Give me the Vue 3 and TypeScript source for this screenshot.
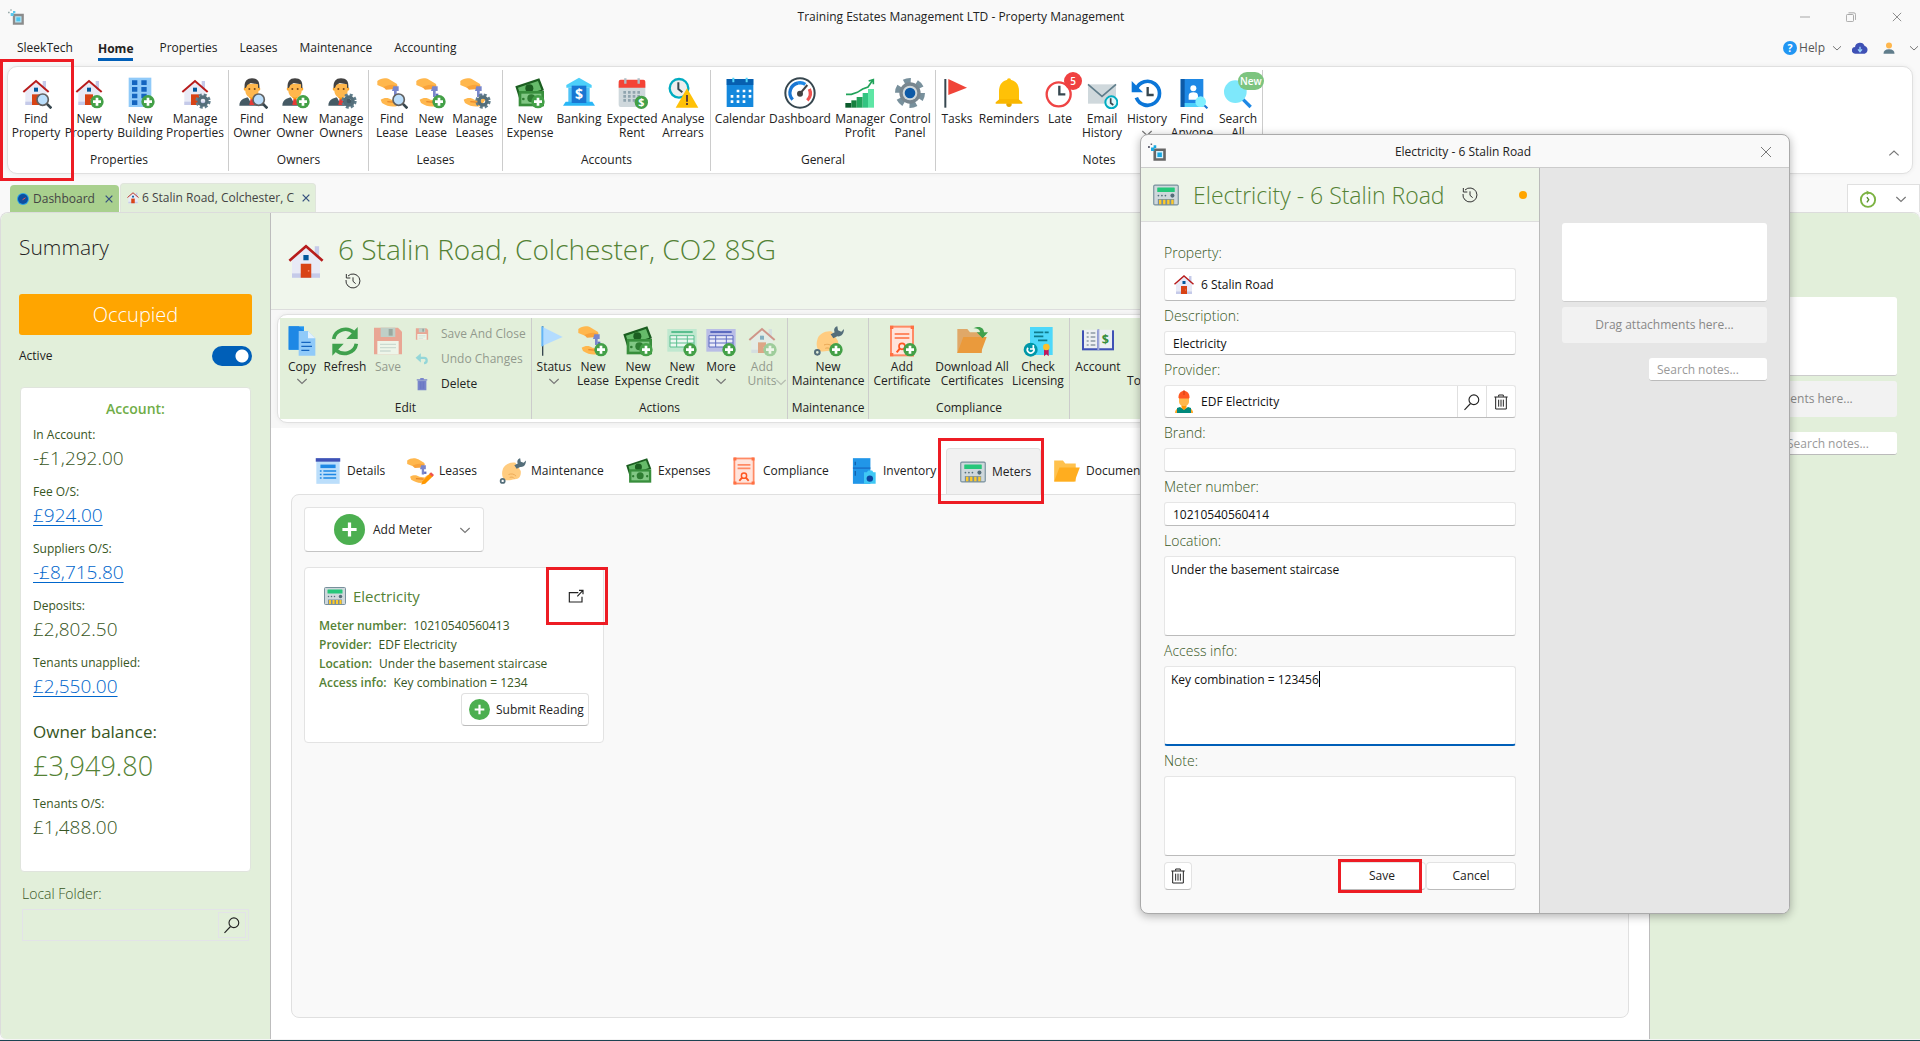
<script setup lang="ts">
import { ref } from 'vue'

interface Item { icon: string; lines: string[]; w: number; badge?: string; chevron?: boolean; off?: boolean; mark?: boolean }
interface Group { name: string; w: number; pad?: number; items: Item[]; side?: { icon: string; text: string; off?: boolean }[] }

const plus = '<circle cx="36" cy="37" r="10" fill="#43a047"/><path d="M36 31v12M30 37h12" stroke="#fff" stroke-width="4" fill="none"/>'
const find = '<path d="M40 40l7 7" stroke="#37474f" stroke-width="4"/><circle cx="34" cy="34" r="8.500" fill="#bbdefb" stroke="#616161" stroke-width="2.500"/>'
const gear = '<circle cx="36" cy="36" r="9.500" fill="none" stroke="#607d8b" stroke-width="4" stroke-dasharray="4.400 3.060"/><circle cx="36" cy="36" r="6" fill="none" stroke="#546e7a" stroke-width="5"/>'
const house = '<path d="M34 6h5v14h-5z" fill="#c5cae9"/><path d="M8 22L24 8l16 14v20H8z" fill="#e8eaf6"/><path d="M8 37h32v5H8z" fill="#c5cae9"/><path d="M18 26h12v16H18z" fill="#d84315"/><path d="M21 16h6v6h-6z" fill="#01579b"/><circle cx="27" cy="34" r="1" fill="#ff8a65"/><path d="M5 22.500L24 6l19 16.500" fill="none" stroke="#b71c1c" stroke-width="3"/>'
const person = '<path d="M5 43c0-9 8-13 19-13s19 4 19 13z" fill="#455a64"/><path d="M17 29l7 13 7-13-3-3h-8z" fill="#fff"/><path d="M22 32h4l2 10h-8z" fill="#e53935"/><path d="M19 22h10v8l-5 4-5-4z" fill="#ff9800"/><circle cx="14" cy="18" r="2.500" fill="#ffa726"/><circle cx="34" cy="18" r="2.500" fill="#ffa726"/><path d="M14 10h20v10c0 7-4 11-10 11s-10-4-10-11z" fill="#ffb74d"/><path d="M13 17C12 7 16 2 24 2c8 0 12 4 11 15l-2-1v-5l-11-2-5 3-2 4z" fill="#424242"/><circle cx="20" cy="18" r="1.500" fill="#784719"/><circle cx="28" cy="18" r="1.500" fill="#784719"/>'
const lease = '<path d="M2 6c6-5 14-5 19-2l10 6c2 2 1 5-2 6H12L2 12z" fill="#ffb74d"/><path d="M11 15c5-2 10-4 16-3l5 1-2 5-15 1z" fill="#f9a33b"/><path d="M26 14h8v7h-3v9h-4v-9h-3z" fill="#7986cb"/><path d="M31 25h4v4h-4z" fill="#5c6bc0"/><path d="M7 34c6-4 12-3 16 0l9 1c3-3 7-6 10-4l-9 12c-8 3-16 1-24-4z" fill="#ffb74d"/><path d="M17 37l13 1" stroke="#e8892a" stroke-width="2"/>'
const money = '<path d="M2 14L38 2l7 18L8 33z" fill="#1b5e20"/><path d="M6 16L36 6l5 13L10 29z" fill="#66bb6a"/><circle cx="23" cy="17" r="6" fill="#1b5e20"/><path d="M7 21h38v23H7z" fill="#388e3c"/><path d="M11 25h30v15H11z" fill="#81c784"/><circle cx="26" cy="32" r="6" fill="#2e7d32"/><circle cx="14" cy="33" r="2" fill="#2e7d32"/><circle cx="38" cy="33" r="2" fill="#2e7d32"/>'
const meter = '<rect x="3" y="7" width="42" height="34" rx="2" fill="#cfd8dc" stroke="#78909c" stroke-width="2"/><rect x="9" y="11" width="30" height="8" rx="1" fill="#26c77a"/><circle cx="11" cy="25" r="1.500" fill="#546e7a"/><circle cx="17" cy="25" r="1.500" fill="#546e7a"/><circle cx="23" cy="25" r="1.500" fill="#546e7a"/><circle cx="35" cy="25" r="3.500" fill="#546e7a"/><path d="M10 31h28v10H10z" fill="#78909c"/><path d="M12 32h4v8h-4zM19 32h4v8h-4zM26 32h4v8h-4zM33 32h4v8h-4z" fill="#ffca28"/>'
const fist = '<path d="M8 22c2-9 14-14 22-12l9 14c1 9-3 14-10 14-7 1-12 3-18 1-4-4-5-11-3-17z" fill="#ffcc80"/><path d="M18 30c5-2 10-1 13 3M20 35c3-1 6-1 8 2" fill="none" stroke="#e9a653" stroke-width="1.500"/><path d="M28 14l6-3c-2-4 0-8 4-9l1 6 5 2 4-4c0 7-4 12-10 11l-6 3z" fill="#546e7a"/><circle cx="8" cy="41" r="3.500" fill="none" stroke="#546e7a" stroke-width="3"/>'
const cert = '<path d="M6 1h36v46H6z" fill="#ff8a65"/><path d="M9 4h30v40H9z" fill="#ffe4dc"/><path d="M6 1h5v5H6zM37 1h5v5h-5zM6 42h5v5H6zM37 42h5v5h-5z" fill="#ff7043"/><path d="M13 12h22v3H13zM13 18h22v3H13z" fill="#ff8a65"/><circle cx="24" cy="32" r="4.500" fill="none" stroke="#ff5722" stroke-width="2.500"/><path d="M21 35l-5 6m11-6l5 6" stroke="#ff5722" stroke-width="3"/>'
const save = '<path d="M3 4h36l6 6v34H3z" fill="#f44336"/><path d="M13 4h22v14H13z" fill="#90a4ae"/><path d="M25 6h6v10h-6z" fill="#37474f"/><path d="M8 24h32v20H8z" fill="#fff"/><path d="M12 29h24M12 34h24M12 39h16" stroke="#b0bec5" stroke-width="2"/>'
const sheet = (a: string, b: string) => `<path d="M2 6h44v34H2z" fill="${a}"/><path d="M8 9h32v3H8z" fill="${b}"/><path d="M6 16h36v17H6z" fill="#fff" opacity=".7"/><path d="M6 16h36v17H6zM6 21h36M6 27h36M16 16v17M32 16v17" fill="none" stroke="${b}" stroke-width="1.500"/>`
const folder = (a: string, b: string) => `<path d="M2 6h15l4 5h18v31H2z" fill="${a}"/><path d="M11 18h35l-9 24H2z" fill="${b}"/>`

const icons: Record<string, string> = {
  house, meter, lease, money, fist, cert, save,
  findHouse: house + find, newHouse: house + plus, manHouse: house + gear,
  building: '<path d="M7 1h34v44H7z" fill="#90caf9"/><path d="M12 5h8v7h-8zM26 5h8v7h-8zM12 15h8v7h-8zM26 15h8v7h-8zM12 25h8v7h-8zM26 25h8v7h-8zM12 35h8v7h-8z" fill="#1565c0"/>' + plus,
  findOwner: person + find, newOwner: person + plus, manOwner: person + gear,
  findLease: lease + find, newLease: lease + plus, manLease: lease + gear,
  newExpense: money + plus,
  bank: '<path d="M24 1l19 11v4H5v-4z" fill="#4dd0fa"/><path d="M8 16h32v24H8z" fill="#4fc3f7"/><path d="M4 37h40l4 6H0z" fill="#29b6f6"/><path d="M13 13h22v26H13z" fill="#1976d2"/><text x="24" y="33" font-size="21" font-weight="700" fill="#fff" text-anchor="middle">$</text>',
  rent: '<path d="M4 10h40v32a3 3 0 01-3 3H7a3 3 0 01-3-3z" fill="#cfd8dc"/><path d="M7 4h34a3 3 0 013 3v9H4V7a3 3 0 013-3z" fill="#f44336"/><path d="M14 2v8M34 2v8" stroke="#b0bec5" stroke-width="3.500"/><path d="M11 23h28M11 29h28M11 35h20" stroke="#90a4ae" stroke-width="4" stroke-dasharray="4 3"/><circle cx="38" cy="38" r="10" fill="#43a047"/><text x="38" y="44" font-size="16" font-weight="700" fill="#fff" text-anchor="middle">$</text>',
  arrears: '<circle cx="18" cy="17" r="14" fill="#eee" stroke="#00acc1" stroke-width="3.500"/><path d="M17 8v10l6 5" fill="none" stroke="#37474f" stroke-width="3"/><path d="M30 17l17 29H13z" fill="#ffc107"/><path d="M28.500 27h3v10h-3zM28.500 39h3v3h-3z" fill="#5d4037"/>',
  calendar: '<path d="M4 3h40v42H4z" fill="#1488dd"/><path d="M4 3h40v9H4z" fill="#075faf"/><path d="M14 1v7M34 1v7" stroke="#50d4fa" stroke-width="3"/><path d="M19 21h22M10 29h31M10 37h22" stroke="#fff" stroke-width="4" stroke-dasharray="4 5"/>',
  gauge: '<circle cx="24" cy="24" r="22" fill="#fff" stroke="#37474f" stroke-width="3"/><path d="M13 34A15 15 0 0121 9" fill="none" stroke="#1976d2" stroke-width="5"/><path d="M21 9a15 15 0 0111 2" fill="none" stroke="#1e88e5" stroke-width="5"/><path d="M38 18a15 15 0 01-3 17" fill="none" stroke="#ef5350" stroke-width="5"/><circle cx="24" cy="25" r="4.500" fill="#424242"/><path d="M24 25L35 12" stroke="#424242" stroke-width="3"/>',
  profit: '<path d="M2 39h9v7H2z" fill="#0b5c2c"/><path d="M11 35h8v11h-8z" fill="#16803f"/><path d="M19 30h9v16h-9z" fill="#21a35a"/><path d="M28 24h8v22h-8z" fill="#33c481"/><path d="M36 18h9v28h-9z" fill="#5ee6a5"/><path d="M3 26h8l9-3 8-5 8-3 7-10M37 6l7-2v7" fill="none" stroke="#21a35a" stroke-width="2.500"/>',
  control: '<circle cx="24" cy="24" r="18" fill="none" stroke="#78909c" stroke-width="9" stroke-dasharray="10 8.850"/><circle cx="24" cy="24" r="16" fill="#78868f"/><circle cx="24" cy="24" r="11" fill="#cfd8dc"/><circle cx="24" cy="24" r="8" fill="#0d5aa7"/>',
  tasks: '<path d="M5 3h3v43H5z" fill="#37474f"/><path d="M11 3l28 13-28 11z" fill="#f04438"/>',
  bell: '<circle cx="24" cy="5" r="3" fill="#ffc107"/><circle cx="24" cy="41" r="4" fill="#e6a700"/><path d="M24 4c-10 0-15 8-15 17v14h30V21c0-9-5-17-15-17z" fill="#ffc107"/><path d="M4 38l6-5h28l6 5v2H4z" fill="#f9b700"/>',
  late: '<circle cx="22" cy="26" r="18" fill="#fff" stroke="#ef4444" stroke-width="3.500"/><path d="M23 13v13h9" fill="none" stroke="#37474f" stroke-width="3.500"/>',
  email: '<path d="M3 11h42v29H3z" fill="#cfd8dc"/><path d="M3 11l21 18 21-18" fill="none" stroke="#607d8b" stroke-width="2.500"/><circle cx="38" cy="38" r="9" fill="#e0f7fa" stroke="#00acc1" stroke-width="3"/><path d="M37 32v7l4 3" fill="none" stroke="#37474f" stroke-width="2.500"/>',
  history: '<path d="M8 18a18 18 0 110 13" fill="none" stroke="#0b76d8" stroke-width="5.500"/><path d="M1 6v17h17z" fill="#0b76d8"/><path d="M25 15v12h9" fill="none" stroke="#37474f" stroke-width="3.500"/>',
  anyone: '<path d="M7 3h34v42H7z" fill="#1e88e5"/><path d="M7 3h6v42H7z" fill="#0d5aa7"/><path d="M13 39h28v6H13z" fill="#4dd0fa"/><circle cx="26" cy="17" r="4.500" fill="#fff"/><path d="M19 34v-6c0-4 3-5 7-5s7 1 7 5v6z" fill="#fff"/><path d="M42 42l5 5" stroke="#1976d2" stroke-width="3"/><circle cx="37" cy="37" r="8" fill="#80f0ff"/>',
  searchAll: '<path d="M30 32l13 13" stroke="#1e88e5" stroke-width="5"/><circle cx="20" cy="22" r="17" fill="#7ee8fb"/>',
  copy: '<path d="M4 2h23v35H4z" fill="#2196f3"/><path d="M4 2h15l10 9v26H4z" fill="#1e88e5"/><path d="M19 9h14l11 11v26H19z" fill="#90caf9"/><path d="M33 9v11h11z" fill="#e3f2fd"/><path d="M23 26h14M23 32h16M23 38h12" stroke="#1565c0" stroke-width="2"/>',
  refresh: '<path d="M7 21A18 17 0 0137 11" fill="none" stroke="#3fa14d" stroke-width="5.500"/><path d="M43 3v18H26z" fill="#3fa14d"/><path d="M41 28A18 17 0 0111 38" fill="none" stroke="#3fa14d" stroke-width="5.500"/><path d="M5 46V28h17z" fill="#3fa14d"/>',
  undo: '<path d="M20 4v32L2 20z" fill="#29b6d6"/><path d="M16 20h15q9 0 9 9t-9 9" fill="none" stroke="#29b6d6" stroke-width="8"/>',
  bin: '<path d="M6 8h36v4H6zM18 3h12v5H18zM9 13h30v32H9z" fill="#7986cb"/><path d="M18 16v25M24 16v25M30 16v25" stroke="#5c6bc0" stroke-width="2"/>',
  status: '<path d="M6 2h2v44H6z" fill="#37474f"/><path d="M7 3l30 15L7 31z" fill="#b3dcff"/><path d="M5 2h3v30H5z" fill="#64b5f6"/>',
  credit: sheet('#bfe8cf', '#5abf8f') + plus, more: sheet('#b9bde6', '#5c6bc0') + plus,
  newMaint: fist + plus, newCert: cert + plus,
  download: folder('#e0a868', '#ea9a3c') + '<path d="M26 5c10-5 16 0 16 6h6l-8 9-9-9h5c0-4-4-6-10-6z" fill="#3fa14d"/>',
  check: '<path d="M12 3h34v42H12z" fill="#4dd8fa"/><path d="M18 11h22M18 17h16M24 23h16" stroke="#0f7b8c" stroke-width="2.500" stroke-dasharray="14 2"/><path d="M33 34h7v13l-3.500-3-3.500 3z" fill="#c2185b"/><circle cx="36.500" cy="33" r="5" fill="#fbc02d"/><circle cx="13" cy="37" r="10.500" fill="#0097a7"/><path d="M9 34a5 5 0 108 0M17 30v6h-5" fill="none" stroke="#fff" stroke-width="2.500"/>',
  account: '<path d="M0 8h48v30H0z" fill="#3f51b5"/><path d="M3 7h20v28H3zM25 7h20v28H25z" fill="#eceff1"/><path d="M23 6h3v32h-3z" fill="#9fa8da"/><path d="M7 12h3M13 12h7M7 18h3M13 18h7M7 24h3M13 24h7M7 30h3M13 30h7" stroke="#8d9aa5" stroke-width="2"/><text x="35" y="28" font-size="19" font-weight="700" fill="#388e3c" text-anchor="middle">$</text>',
  none: '',
  details: '<path d="M4 2h40v44H4z" fill="#bbdefb"/><path d="M3 2h42v6H3z" fill="#3f51b5"/><path d="M11 13h26v6H11z" fill="#1e88e5"/><path d="M10 24h3M16 24h22M10 30h3M16 30h22M10 36h3M16 36h22" stroke="#1e88e5" stroke-width="2.500"/>',
  leasePen: lease + '<path d="M28 42l14-15 5 5-14 14-7 1z" fill="#ff9800"/><path d="M40 29l3-3 5 5-3 3z" fill="#ef5350"/>',
  fridge: '<path d="M5 2h30v44H5z" fill="#2196e8"/><path d="M5 18h30v2H5z" fill="#1565c0"/><path d="M9 8v6M9 24v8" stroke="#0d5aa7" stroke-width="2"/><path d="M24 26h5l2-3h7l2 3h4v20H24z" fill="#3fc8f5"/><circle cx="34" cy="37" r="5.500" fill="#0d47a1"/>',
  folder: folder('#ffc14d', '#ffad1f'),
  worker: '<path d="M6 46c0-8 6-11 18-11s18 3 18 11z" fill="#ffa726"/><path d="M10 46V36l6-2 8 6 8-6 6 2v10z" fill="#00897b"/><path d="M19 25h10v9l-5 5-5-5z" fill="#ff9800"/><path d="M14 14h20v9c0 6-5 9-10 9s-10-3-10-9z" fill="#ffb74d"/><path d="M13 15c0-8 4-13 11-13s11 5 11 13l-1 2H14z" fill="#ff5722"/><path d="M22 1h4v9h-4z" fill="#e64a19"/>',
  addCircle: '<circle cx="24" cy="24" r="24" fill="#4caf50"/><path d="M24 13v22M13 24h22" stroke="#fff" stroke-width="5"/>',
  glass: '<circle cx="29" cy="18" r="13" fill="none" stroke="#222" stroke-width="3"/><path d="M20 28L4 45" stroke="#222" stroke-width="3"/>',
  trash: '<path d="M4 9h40M17 8V3h14v5M8 9v36h32V9M17 17v21M24 17v21M31 17v21" fill="none" stroke="#222" stroke-width="3"/>',
  clock: '<path d="M9 9a21 21 0 11-6 12" fill="none" stroke="#333" stroke-width="3"/><path d="M4 3v12h12M24 13v12l8 7" fill="none" stroke="#333" stroke-width="3"/>',
  logo: '<path d="M18 18h26v26H18z" fill="#b9e6f5" stroke="#8c8c8c" stroke-width="7"/><path d="M25 25h12v12H25z" fill="#4cc5ef"/><path d="M8 12h9v9H8zM15 6h7v7h-7z" fill="#5ac8ee"/><path d="M0 8h5v5H0zM7 1h4v4H7z" fill="#9aa"/>',
  logoDark: '<path d="M18 18h26v26H18z" fill="#d6f0fa" stroke="#666" stroke-width="7"/><path d="M25 25h12v12H25z" fill="#17a7e0"/><path d="M8 12h9v9H8zM15 6h7v7h-7z" fill="#17a7e0"/><path d="M0 8h5v5H0zM7 1h4v4H7z" fill="#667"/>',
  chev: '<path d="M8 17l16 15 16-15" fill="none" stroke="#777" stroke-width="4"/>',
  chevUp: '<path d="M8 32l16-15 16 15" fill="none" stroke="#777" stroke-width="4"/>',
  cross: '<path d="M4 4l40 40M44 4L4 44" fill="none" stroke="#666" stroke-width="3.500"/>',
  crossTab: '<path d="M8 8l32 32M40 8L8 40" fill="none" stroke="#35507e" stroke-width="6"/>',
  min: '<path d="M0 24h48" stroke="#999" stroke-width="4"/>',
  max: '<rect x="2" y="12" width="34" height="34" rx="5" fill="none" stroke="#999" stroke-width="4"/><path d="M12 4h26q8 0 8 8v26" fill="none" stroke="#999" stroke-width="4"/>',
  help: '<circle cx="24" cy="24" r="24" fill="#2196f3"/><text x="24" y="37" font-size="36" font-weight="700" fill="#fff" text-anchor="middle">?</text>',
  cloud: '<path d="M10 41a10 10 0 01-1-20 15 15 0 0129-3 12 12 0 010 23z" fill="#3f51b5"/><path d="M24 20v14M18 28l6 7 6-7" fill="none" stroke="#9fd8ff" stroke-width="4"/>',
  user: '<circle cx="24" cy="14" r="12" fill="#ffb74d"/><path d="M2 47c0-12 7-18 22-18s22 6 22 18z" fill="#607d8b"/>',
  dash: '<circle cx="24" cy="24" r="24" fill="#29a3e8"/><circle cx="24" cy="24" r="20" fill="#0d4fa0"/><path d="M22 27l12-8" stroke="#ef5350" stroke-width="4"/>',
  timer: '<circle cx="24" cy="26" r="19" fill="none" stroke="#7cb342" stroke-width="5"/><path d="M20 1l10 6-9 6z" fill="#7cb342"/><path d="M21 19l5 7-5 7" fill="none" stroke="#558b2f" stroke-width="3.500"/>',
  popout: '<path d="M31 14H4v28h38V26M28 25L44 8M33 7h12v12" fill="none" stroke="#222" stroke-width="3.500"/>',
}

const menus = ['Properties', 'Leases', 'Maintenance', 'Accounting']

const ribbon: Group[] = [
  { name: 'Properties', w: 221, pad: 2, items: [
    { icon: 'findHouse', lines: ['Find', 'Property'], w: 52, mark: true },
    { icon: 'newHouse', lines: ['New', 'Property'], w: 54 },
    { icon: 'building', lines: ['New', 'Building'], w: 48 },
    { icon: 'manHouse', lines: ['Manage', 'Properties'], w: 62 }] },
  { name: 'Owners', w: 140, items: [
    { icon: 'findOwner', lines: ['Find', 'Owner'], w: 46 },
    { icon: 'newOwner', lines: ['New', 'Owner'], w: 40 },
    { icon: 'manOwner', lines: ['Manage', 'Owners'], w: 52 }] },
  { name: 'Leases', w: 134, items: [
    { icon: 'findLease', lines: ['Find', 'Lease'], w: 46 },
    { icon: 'newLease', lines: ['New', 'Lease'], w: 32 },
    { icon: 'manLease', lines: ['Manage', 'Leases'], w: 55 }] },
  { name: 'Accounts', w: 208, items: [
    { icon: 'newExpense', lines: ['New', 'Expense'], w: 54 },
    { icon: 'bank', lines: ['Banking'], w: 44 },
    { icon: 'rent', lines: ['Expected', 'Rent'], w: 62 },
    { icon: 'arrears', lines: ['Analyse', 'Arrears'], w: 40 }] },
  { name: 'General', w: 225, items: [
    { icon: 'calendar', lines: ['Calendar'], w: 58 },
    { icon: 'gauge', lines: ['Dashboard'], w: 62 },
    { icon: 'profit', lines: ['Manager', 'Profit'], w: 58 },
    { icon: 'control', lines: ['Control', 'Panel'], w: 42 }] },
  { name: 'Notes', w: 327, items: [
    { icon: 'tasks', lines: ['Tasks'], w: 42 },
    { icon: 'bell', lines: ['Reminders'], w: 62 },
    { icon: 'late', lines: ['Late'], w: 40, badge: '5' },
    { icon: 'email', lines: ['Email', 'History'], w: 44 },
    { icon: 'history', lines: ['History'], w: 46, chevron: true },
    { icon: 'anyone', lines: ['Find', 'Anyone'], w: 44 },
    { icon: 'searchAll', lines: ['Search', 'All'], w: 48, badge: 'New' }] },
]

const actions: Group[] = [
  { name: 'Edit', w: 252, items: [
    { icon: 'copy', lines: ['Copy'], w: 44, chevron: true },
    { icon: 'refresh', lines: ['Refresh'], w: 42 },
    { icon: 'save', lines: ['Save'], w: 44, off: true }],
    side: [
      { icon: 'save', text: 'Save And Close', off: true },
      { icon: 'undo', text: 'Undo Changes', off: true },
      { icon: 'bin', text: 'Delete' }] },
  { name: 'Actions', w: 256, items: [
    { icon: 'status', lines: ['Status'], w: 44, chevron: true },
    { icon: 'newLease', lines: ['New', 'Lease'], w: 34 },
    { icon: 'newExpense', lines: ['New', 'Expense'], w: 56 },
    { icon: 'credit', lines: ['New', 'Credit'], w: 32 },
    { icon: 'more', lines: ['More'], w: 46, chevron: true },
    { icon: 'newHouse', lines: ['Add', 'Units'], w: 36, off: true, chevron: true }] },
  { name: 'Maintenance', w: 81, items: [{ icon: 'newMaint', lines: ['New', 'Maintenance'], w: 80 }] },
  { name: 'Compliance', w: 201, items: [
    { icon: 'newCert', lines: ['Add', 'Certificate'], w: 66 },
    { icon: 'download', lines: ['Download All', 'Certificates'], w: 74 },
    { icon: 'check', lines: ['Check', 'Licensing'], w: 58 }] },
  { name: '', w: 300, items: [
    { icon: 'account', lines: ['Account'], w: 56 },
    { icon: 'none', lines: ['\u00a0', 'To'], w: 16 }] },
]

const figures = [
  { label: 'In Account:', value: '-£1,292.00', link: false },
  { label: 'Fee O/S:', value: '£924.00', link: true },
  { label: 'Suppliers O/S:', value: '-£8,715.80', link: true },
  { label: 'Deposits:', value: '£2,802.50', link: false },
  { label: 'Tenants unapplied:', value: '£2,550.00', link: true },
]

const tabs = [
  { icon: 'details', text: 'Details', w: 92 },
  { icon: 'leasePen', text: 'Leases', w: 92 },
  { icon: 'fist', text: 'Maintenance', w: 127 },
  { icon: 'money', text: 'Expenses', w: 105 },
  { icon: 'cert', text: 'Compliance', w: 120 },
  { icon: 'fridge', text: 'Inventory', w: 108 },
  { icon: 'meter', text: 'Meters', w: 95, on: true },
  { icon: 'folder', text: 'Documents', w: 120 },
]

const facts = [
  ['Meter number:', '10210540560413'],
  ['Provider:', 'EDF Electricity'],
  ['Location:', 'Under the basement staircase'],
  ['Access info:', 'Key combination = 1234'],
]

const active = ref(true)
const form = ref({
  property: '6 Stalin Road', description: 'Electricity', provider: 'EDF Electricity', brand: '',
  number: '10210540560414', location: 'Under the basement staircase', access: 'Key combination = 123456', note: '',
})
</script>

<template>
  <div class="app">
    <header class="titlebar">
      <svg class="i16" viewBox="0 0 48 48" v-html="icons.logo" />
      <span class="apptitle">Training Estates Management LTD - Property Management</span>
      <div class="winbtns">
        <button aria-label="Minimise"><svg class="i10" viewBox="0 0 48 48" v-html="icons.min" /></button>
        <button aria-label="Restore"><svg class="i10" viewBox="0 0 48 48" v-html="icons.max" /></button>
        <button aria-label="Close"><svg class="i10" viewBox="0 0 48 48" v-html="icons.cross" /></button>
      </div>
    </header>

    <nav class="menubar">
      <button class="brand">SleekTech</button>
      <button class="home">Home</button>
      <button v-for="m in menus" :key="m" class="menu">{{ m }}</button>
      <div class="account">
        <button class="help"><svg class="i14" viewBox="0 0 48 48" v-html="icons.help" />Help</button>
        <svg class="i12" viewBox="0 0 48 48" v-html="icons.chev" />
        <svg class="i16" viewBox="0 0 48 48" v-html="icons.cloud" />
        <svg class="i12 user" viewBox="0 0 48 48" v-html="icons.user" />
        <svg class="i12" viewBox="0 0 48 48" v-html="icons.chev" />
      </div>
    </nav>

    <section class="ribbon main-ribbon">
      <div v-for="g in ribbon" :key="g.name" class="group" :style="{ width: g.w + 'px', paddingLeft: (g.pad || 0) + 'px' }">
        <div class="items">
          <button v-for="it in g.items" :key="it.icon" class="tool" :style="{ width: it.w + 'px' }">
            <svg class="i32" viewBox="0 0 48 48" v-html="icons[it.icon]" />
            <span v-for="l in it.lines" :key="l">{{ l }}</span>
            <svg v-if="it.chevron" class="i14 drop" viewBox="0 0 48 48" v-html="icons.chev" />
            <b v-if="it.badge" class="badge" :class="{ fresh: it.badge === 'New' }">{{ it.badge }}</b>
            <i v-if="it.mark" class="mark mark-find" />
          </button>
        </div>
        <div class="gname">{{ g.name }}</div>
      </div>
      <button class="collapse" aria-label="Collapse ribbon"><svg class="i14" viewBox="0 0 48 48" v-html="icons.chevUp" /></button>
    </section>

    <div class="doctabs">
      <button class="doc dash"><svg class="i12" viewBox="0 0 48 48" v-html="icons.dash" /><span>Dashboard</span><svg class="i10" viewBox="0 0 48 48" v-html="icons.crossTab" /></button>
      <button class="doc prop"><svg class="i14" viewBox="0 0 48 48" v-html="icons.house" /><span>6 Stalin Road, Colchester, C</span><svg class="i10" viewBox="0 0 48 48" v-html="icons.crossTab" /></button>
      <button class="timer" aria-label="Recent"><svg class="i18" viewBox="0 0 48 48" v-html="icons.timer" /><svg class="i14" viewBox="0 0 48 48" v-html="icons.chev" /></button>
    </div>

    <main class="body">
      <aside class="left">
        <h2>Summary</h2>
        <button class="occupied">Occupied</button>
        <label class="active">Active<input v-model="active" type="checkbox" role="switch"></label>
        <section class="acct">
          <h3>Account:</h3>
          <div v-for="f in figures" :key="f.label" class="fig">
            <span>{{ f.label }}</span>
            <a v-if="f.link" href="#">{{ f.value }}</a>
            <strong v-else>{{ f.value }}</strong>
          </div>
          <div class="fig owner"><span>Owner balance:</span><strong>£3,949.80</strong></div>
          <div class="fig"><span>Tenants O/S:</span><strong>£1,488.00</strong></div>
        </section>
        <label class="flabel" for="folder">Local Folder:</label>
        <div class="folder">
          <input id="folder" type="text">
          <button aria-label="Browse"><svg class="i18" viewBox="0 0 48 48" v-html="icons.glass" /></button>
        </div>
      </aside>

      <section class="centre">
        <div class="hero">
          <svg class="i42" viewBox="0 0 48 48" v-html="icons.house" />
          <div>
            <h1>6 Stalin Road, Colchester, CO2 8SG</h1>
            <button aria-label="History"><svg class="i16" viewBox="0 0 48 48" v-html="icons.clock" /></button>
          </div>
        </div>
        <div class="band">
          <div class="ribbon inner-ribbon">
            <div v-for="g in actions" :key="g.name" class="group" :style="{ width: g.w + 'px' }">
              <div class="items">
                <button v-for="it in g.items" :key="it.icon" class="tool" :class="{ off: it.off, wide: it.chevron && it.lines.length > 1 }" :style="{ width: it.w + 'px' }">
                  <svg class="i32" viewBox="0 0 48 48" v-html="icons[it.icon]" />
                  <span v-for="l in it.lines" :key="l">{{ l }}</span>
                  <svg v-if="it.chevron" class="i14 drop" viewBox="0 0 48 48" v-html="icons.chev" />
                </button>
                <div v-if="g.side" class="side">
                  <button v-for="s in g.side" :key="s.text" :class="{ off: s.off }"><svg class="i14" viewBox="0 0 48 48" v-html="icons[s.icon]" />{{ s.text }}</button>
                </div>
              </div>
              <div class="gname">{{ g.name }}</div>
            </div>
          </div>
        </div>
        <div class="tabs">
          <button v-for="t in tabs" :key="t.text" class="tab" :class="{ on: t.on }" :style="{ width: t.w + 'px' }">
            <svg class="i28" viewBox="0 0 48 48" v-html="icons[t.icon]" />{{ t.text }}
            <i v-if="t.on" class="mark mark-tab" />
          </button>
        </div>
        <div class="panel">
          <button class="addmeter">
            <svg class="i31" viewBox="0 0 48 48" v-html="icons.addCircle" /><span>Add Meter</span>
            <svg class="i14" viewBox="0 0 48 48" v-html="icons.chev" />
          </button>
          <article class="card">
            <div class="cardhead">
              <svg class="i24" viewBox="0 0 48 48" v-html="icons.meter" /><h4>Electricity</h4>
              <button class="pop" aria-label="Open meter"><svg class="i16" viewBox="0 0 48 48" v-html="icons.popout" /><i class="mark mark-pop" /></button>
            </div>
            <p v-for="f in facts" :key="f[0]"><b>{{ f[0] }}</b>{{ f[1] }}</p>
            <button class="submit"><svg class="i21" viewBox="0 0 48 48" v-html="icons.addCircle" />Submit Reading</button>
          </article>
        </div>
      </section>

      <aside class="right">
        <div class="box" />
        <div class="dropzone">Drag attachments here...</div>
        <input class="search" type="text" placeholder="Search notes..." aria-label="Search notes">
      </aside>
    </main>
    <div class="taskbar" />

    <section class="dialog" role="dialog" aria-label="Electricity - 6 Stalin Road">
      <header class="dtitle">
        <svg class="i18" viewBox="0 0 48 48" v-html="icons.logoDark" />
        <span>Electricity - 6 Stalin Road</span>
        <button aria-label="Close dialog"><svg class="i12" viewBox="0 0 48 48" v-html="icons.cross" /></button>
      </header>
      <div class="dbody">
        <div class="dleft">
          <div class="dhead">
            <svg class="i28" viewBox="0 0 48 48" v-html="icons.meter" />
            <h2>Electricity - 6 Stalin Road</h2>
            <svg class="i16" viewBox="0 0 48 48" v-html="icons.clock" />
            <i class="dot" />
          </div>
          <form class="form" @submit.prevent>
            <label for="f1">Property:</label>
            <div class="pick"><svg class="i24" viewBox="0 0 48 48" v-html="icons.house" /><input id="f1" v-model="form.property"></div>
            <label for="f2">Description:</label>
            <input id="f2" v-model="form.description" class="line">
            <label for="f3">Provider:</label>
            <div class="pick">
              <svg class="i24" viewBox="0 0 48 48" v-html="icons.worker" /><input id="f3" v-model="form.provider">
              <button type="button" aria-label="Find provider"><svg class="i18" viewBox="0 0 48 48" v-html="icons.glass" /></button>
              <button type="button" aria-label="Clear provider"><svg class="i16" viewBox="0 0 48 48" v-html="icons.trash" /></button>
            </div>
            <label for="f4">Brand:</label>
            <input id="f4" v-model="form.brand" class="line">
            <label for="f5">Meter number:</label>
            <input id="f5" v-model="form.number" class="line">
            <label for="f6">Location:</label>
            <textarea id="f6" v-model="form.location" />
            <label for="f7">Access info:</label>
            <div class="focusbox"><textarea id="f7" v-model="form.access" class="focused" /><i class="caret" /></div>
            <label for="f8">Note:</label>
            <textarea id="f8" v-model="form.note" />
            <div class="dbtns">
              <button type="button" class="del" aria-label="Delete"><svg class="i16" viewBox="0 0 48 48" v-html="icons.trash" /></button>
              <button type="submit" class="save">Save<i class="mark mark-save" /></button>
              <button type="button" class="cancel">Cancel</button>
            </div>
          </form>
        </div>
        <aside class="dright">
          <div class="box" />
          <div class="dropzone">Drag attachments here...</div>
          <input class="search" type="text" placeholder="Search notes..." aria-label="Search meter notes">
        </aside>
      </div>
    </section>
  </div>
</template>

<style>
body { margin: 0; background: #f9f9f9; }
</style>

<style scoped>
* { box-sizing: border-box; }
.app { position: relative; min-height: 100vh; display: flex; flex-direction: column; overflow: hidden; background: #f9f9f9; color: #222; font: 12px/14px 'Open Sans', 'Noto Sans', sans-serif; }
button { font: inherit; color: inherit; background: none; border: 0; padding: 0; margin: 0; white-space: nowrap; }
input, textarea { font: inherit; color: inherit; margin: 0; outline: 0; min-width: 0; }
h1, h2, h3, h4, p { margin: 0; font-weight: 400; }
svg { display: block; flex: none; }
.i10 { width: 10px; height: 10px; }
.i12 { width: 12px; height: 12px; }
.i14 { width: 14px; height: 14px; }
.i16 { width: 16px; height: 16px; }
.i18 { width: 18px; height: 18px; }
.i21 { width: 21px; height: 21px; }
.i24 { width: 24px; height: 24px; }
.i28 { width: 28px; height: 28px; }
.i31 { width: 31px; height: 31px; }
.i32 { width: 32px; height: 32px; }
.i42 { width: 42px; height: 42px; }
.mark { position: absolute; border: 3px solid #ed1c24; z-index: 3; pointer-events: none; }

.titlebar { display: flex; align-items: center; height: 34px; padding-left: 8px; }
.apptitle { flex: 1; text-align: center; padding-left: 116px; }
.winbtns { display: flex; }
.winbtns button { width: 46px; height: 32px; display: flex; align-items: center; justify-content: center; }

.menubar { display: flex; align-items: center; height: 32px; padding: 0 0 4px 17px; }
.brand { width: 81px; text-align: left; }
.home { font-weight: 700; border-bottom: 3px solid #005fb8; padding-top: 7px; padding-bottom: 2px; margin-right: 15px; }
.menu { padding: 0 11px; }
.account { margin-left: auto; display: flex; align-items: center; }
.help { display: flex; align-items: center; gap: 2px; margin-right: 6px; color: #555; }
.account .i16 { margin: 0 15px 0 9px; }
.account .user { margin-right: 13px; }

.ribbon { display: flex; background: #fff; border: 1px solid #e0e0e0; border-radius: 10px; box-shadow: 0 0 5px rgba(0, 0, 0, .06); }
.main-ribbon { position: relative; margin: 0 7px; height: 108px; padding: 3px 0 2px; }
.group { flex: none; display: flex; flex-direction: column; border-right: 1px solid #ccc; padding: 7px 0 3px; }
.items { flex: 1; display: flex; }
.tool { position: relative; flex: none; display: flex; flex-direction: column; align-items: center; }
.tool .i32 { margin-bottom: 3px; }
.wide .drop { position: absolute; right: -8px; top: 50px; }
.off { opacity: .42; }
.gname { text-align: center; line-height: 16px; min-height: 16px; }
.badge { position: absolute; left: 24px; top: -5px; min-width: 18px; height: 18px; border-radius: 9px; background: #f04040; color: #fff; font-size: 10px; font-weight: 600; line-height: 18px; text-align: center; }
.fresh { left: 24px; padding: 0 2px; background: #7cc47f; }
.collapse { position: absolute; right: 11px; bottom: 13px; }
.mark-find { left: -10px; top: -18px; width: 74px; height: 122px; }

.doctabs { display: flex; align-items: flex-end; height: 38px; padding-left: 10px; color: #444; }
.doc { display: flex; align-items: center; border-radius: 4px 4px 0 0; }
.doc span { flex: 1; text-align: left; }
.dash { width: 109px; height: 27px; background: #a9d08e; padding: 0 5px 0 7px; gap: 4px; margin-right: 1px; }
.prop { width: 196px; height: 29px; background: #e2efda; border: 1px solid #e0e5dc; border-bottom: 0; padding: 0 4px 0 5px; gap: 2px; }
.timer { display: flex; align-items: center; justify-content: space-between; width: 73px; height: 28px; margin-left: auto; background: #fff; border: 1px solid #e0e0e0; border-bottom: 0; padding: 0 11px; }

.body { flex: 1; display: flex; background: #fff; border: solid #dcdcdc; border-width: 1px 0 0 1px; border-radius: 8px 8px 0 6px; overflow: hidden; }
.taskbar { height: 2px; background: linear-gradient(#f4f4f4 50%, #1c4453 50%); }
.left { flex: none; width: 270px; background: #e2efda; border-right: 1px solid #bdbdbd; padding: 18px 18px 0 18px; }
.left h2 { font-size: 21px; font-weight: 300; line-height: 32px; margin-bottom: 31px; }
.occupied { width: 100%; height: 41px; border-radius: 3px; background: #ffa500; color: #fff; font-size: 20px; font-weight: 300; }
.active { display: flex; justify-content: space-between; align-items: center; height: 42px; }
.active input { appearance: none; width: 40px; height: 20px; border-radius: 10px; background: radial-gradient(circle at 30px 10px, #fff 6px, #005fb8 7px); }
.acct { height: 485px; margin: 10px 1px 0; padding: 13px 12px 0; background: #fff; border: 1px solid #e0e4dd; border-radius: 4px; color: #375623; }
.acct h3 { font-size: 14px; font-weight: 600; line-height: 16px; text-align: center; color: #70ad47; margin-bottom: 8px; }
.fig { display: flex; flex-direction: column; align-items: flex-start; height: 57px; }
.fig span { line-height: 19px; }
.fig strong, .fig a { font-size: 19px; font-weight: 300; line-height: 28px; }
.fig a { color: #0066cc; text-underline-offset: 3px; }
.owner { height: 76px; margin-top: 8px; }
.owner span { font-size: 17px; line-height: 28px; }
.owner strong { font-size: 27px; line-height: 40px; color: #548235; }
.flabel, .form label { display: block; font-size: 14px; font-weight: 300; line-height: 30px; color: #375623; }
.flabel { margin: 7px 0 0 3px; }
.folder { display: flex; align-items: center; height: 32px; margin: 0 3px; padding: 2px; border: 1px solid #e3e3e8; }
.folder input { flex: 1; border: 0; background: none; }
.folder button { width: 28px; height: 26px; border: 1px solid #e3e3e8; display: flex; align-items: center; justify-content: center; }

.centre { flex: 1; min-width: 0; display: flex; flex-direction: column; background: #fff; }
.hero { display: flex; height: 97px; background: #f0f6ec; border-bottom: 1px solid #ddd; padding: 14px 0 0 14px; }
.hero .i42 { margin-top: 14px; }
.hero div { margin-left: 11px; }
.hero h1 { font-size: 28px; font-weight: 300; line-height: 44px; color: #548235; white-space: nowrap; }
.hero button { display: block; margin: 2px 0 0 7px; }
.band { background: #f7f7f7; padding: 4px 6px 5px; overflow: hidden; }
.inner-ribbon { height: 109px; padding: 3px 2px; }
.inner-ribbon .group { background: #e2efda; }
.inner-ribbon .group:last-child { flex: 1; border: 0; }
.side { padding-left: 5px; margin-top: -4px; }
.side button { display: flex; align-items: center; gap: 12px; height: 25px; }
.tabs { display: flex; height: 66px; padding: 20px 0 0 31px; }
.tab { position: relative; flex: none; display: flex; align-items: center; gap: 5px; padding-left: 12px; }
.on { background: #f1f1f1; border: 1px solid #e0e0e0; border-bottom: 0; border-radius: 4px 4px 0 0; }
.mark-tab { left: -9px; top: -11px; width: 106px; height: 66px; }
.panel { flex: 1; margin: 0 20px 21px; padding: 12px; background: #f9f9f9; border: 1px solid #e0e0e0; border-radius: 8px; }
.addmeter { display: flex; align-items: center; gap: 8px; width: 180px; height: 45px; padding: 0 11px 0 29px; background: #fff; border: 1px solid #e3e3e3; border-bottom-color: #c4c4c4; border-radius: 4px; }
.addmeter span { flex: 1; text-align: left; }
.card { display: flex; flex-direction: column; width: 300px; height: 176px; margin-top: 15px; padding: 11px 14px 0; background: #fff; border: 1px solid #e3e3e3; border-radius: 4px; color: #375623; }
.cardhead { display: flex; align-items: center; height: 34px; padding-left: 4px; margin-bottom: 3px; }
.cardhead h4 { flex: 1; margin-left: 6px; font-size: 15px; line-height: 20px; color: #548235; }
.pop { position: relative; margin-right: 5px; }
.mark-pop { left: -22px; top: -21px; width: 62px; height: 58px; }
.card p { line-height: 19px; }
.card b { font-weight: 600; color: #548235; margin-right: 7px; }
.submit { display: flex; align-items: center; align-self: flex-end; gap: 6px; width: 128px; height: 33px; padding-left: 7px; border: 1px solid #e0e0e0; border-bottom-color: #bbb; border-radius: 4px; color: #222; margin-top: 1px; }

.right { flex: none; width: 271px; background: #e2efda; border-left: 1px solid #bdbdbd; padding: 84px 23px 0 20px; }
.box { height: 79px; background: #fff; border-bottom: 1px solid #ccc; border-radius: 3px; }
.dropzone { height: 36px; margin: 5px 0 15px; line-height: 36px; text-align: center; background: #f2f2f2; color: #888; border-radius: 3px; }
.search { display: block; margin-left: auto; width: 118px; height: 23px; padding: 0 8px; background: #fff; border: 0; border-bottom: 1px solid #bbb; border-radius: 3px; }
.search::placeholder { color: #999; }

.dialog { position: absolute; left: 1140px; top: 134px; width: 650px; height: 780px; display: flex; flex-direction: column; background: #f9f9f9; border: 1px solid #aaa; border-radius: 8px; box-shadow: 0 2px 10px rgba(0, 0, 0, .3); overflow: hidden; z-index: 5; }
.dtitle { display: flex; align-items: center; height: 33px; padding: 1px 17px 0 7px; border-bottom: 1px solid #ccc; flex: none; }
.dtitle span { flex: 1; text-align: center; }
.dbody { flex: 1; display: flex; }
.dleft { width: 398px; }
.dhead { display: flex; align-items: center; height: 54px; padding: 0 12px 0 11px; background: #edf4e8; border-bottom: 1px solid #ddd; }
.dhead h2 { margin: 0 17px 0 13px; font-size: 23px; font-weight: 300; line-height: 34px; color: #548235; white-space: nowrap; }
.dot { width: 8px; height: 8px; margin-left: auto; border-radius: 50%; background: #ffa500; }
.form { padding: 16px 23px 0 23px; }
.line, .pick, textarea { display: block; width: 100%; background: #fff; border: 1px solid #e6e6e6; border-bottom-color: #bbb; border-radius: 3px; color: #111; }
.line { height: 24px; padding: 0 8px; }
.pick { display: flex; align-items: center; height: 33px; padding-left: 7px; }
.pick input { flex: 1; border: 0; background: none; padding: 0 0 0 5px; }
.pick button { width: 29px; height: 31px; border-left: 1px solid #e0e0e0; display: flex; align-items: center; justify-content: center; }
textarea { height: 80px; padding: 6px; resize: none; }
.focusbox { position: relative; }
.focused { border-bottom: 2px solid #005fb8; }
.caret { position: absolute; left: 155px; top: 5px; width: 1px; height: 16px; background: #000; }
.dbtns { display: flex; margin-top: 6px; }
.dbtns button { position: relative; height: 28px; background: #fff; border: 1px solid #e3e3e3; border-bottom-color: #bbb; border-radius: 4px; color: #222; }
.dbtns .del { width: 28px; margin-right: auto; display: flex; align-items: center; justify-content: center; }
.dbtns .save { width: 88px; }
.dbtns .cancel { width: 90px; }
.mark-save { left: -1px; top: -4px; width: 84px; height: 34px; }
.dright { flex: 1; background: #e6e6e6; border-left: 1px solid #bbb; padding: 55px 22px 0 22px; }
</style>
